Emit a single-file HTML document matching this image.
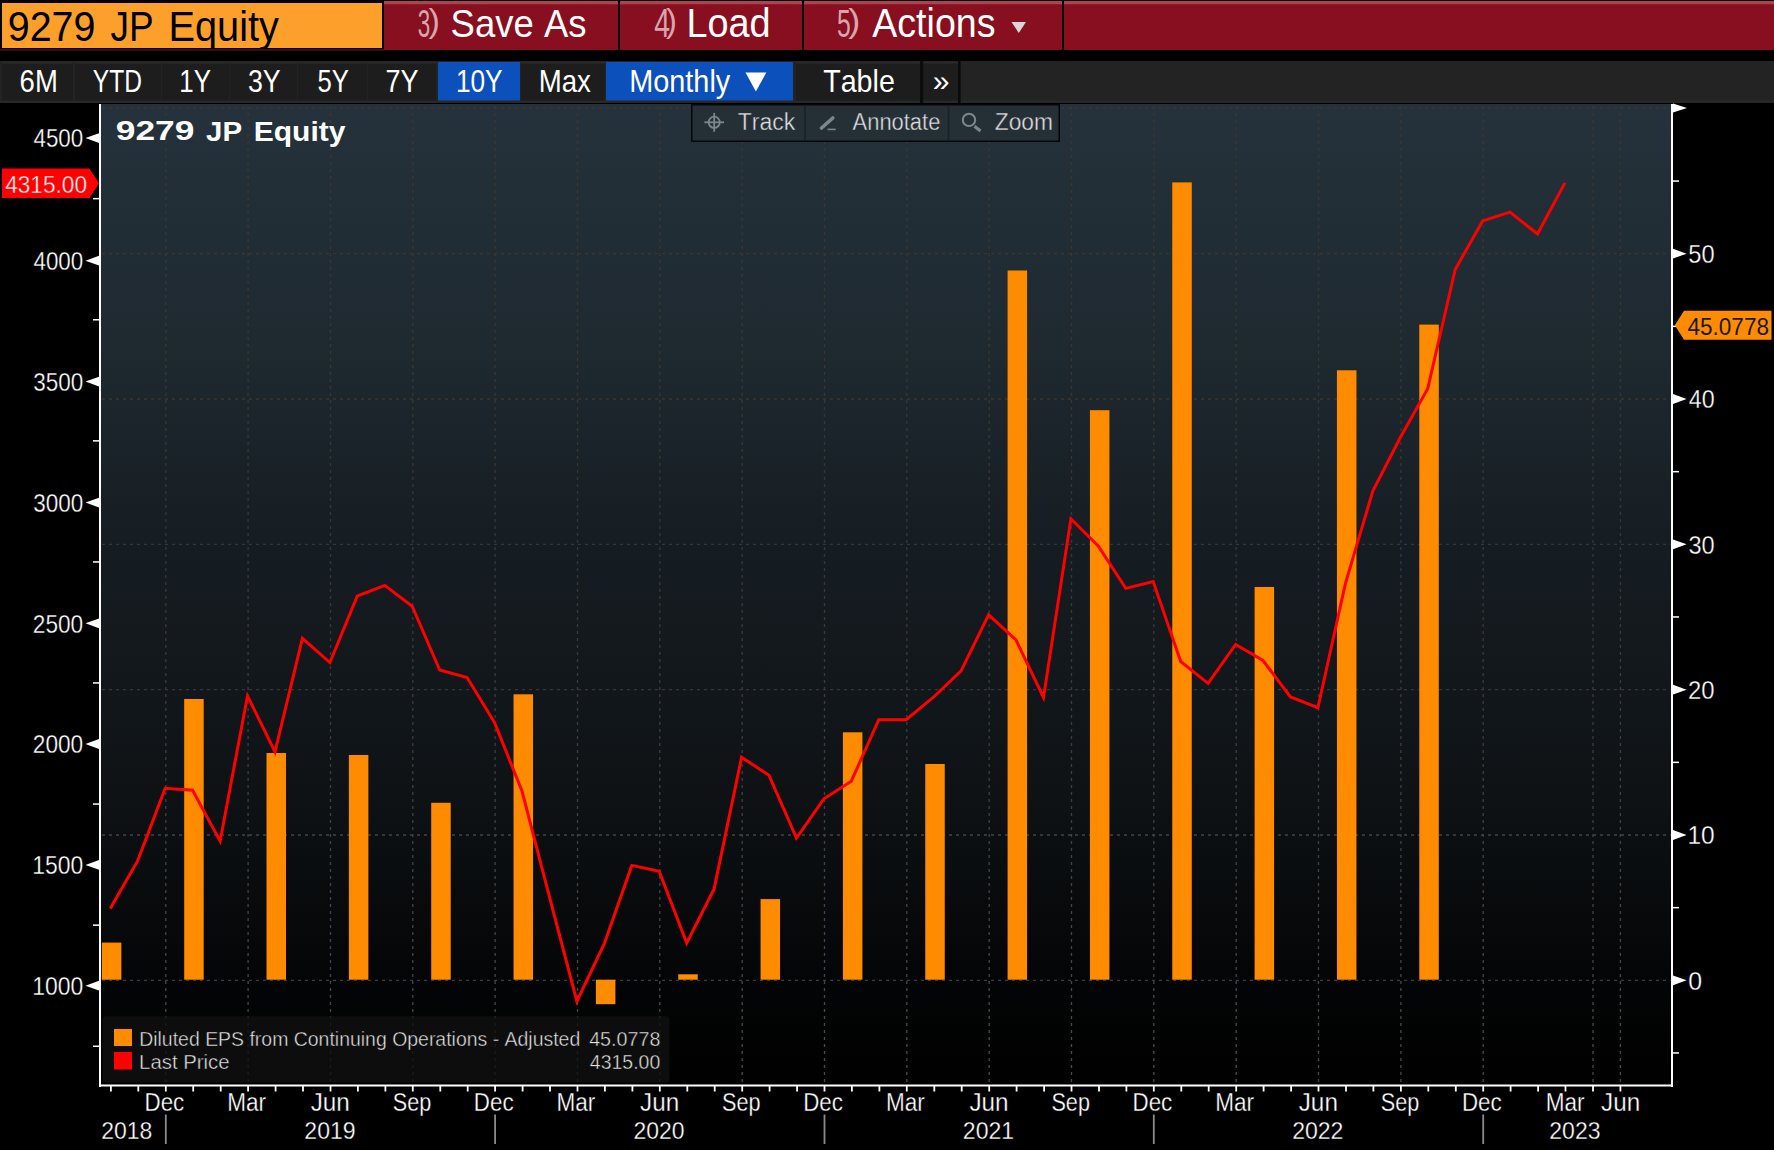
<!DOCTYPE html><html><head><meta charset="utf-8"><style>
html,body{margin:0;padding:0;background:#000;width:1774px;height:1150px;overflow:hidden}
svg{display:block}
text{font-family:"Liberation Sans", sans-serif;font-kerning:none}
</style></head><body>
<svg width="1774" height="1150" viewBox="0 0 1774 1150">
<defs>
<linearGradient id="bg" x1="0" y1="0" x2="0" y2="1">
<stop offset="0" stop-color="#25323b"/>
<stop offset="0.25" stop-color="#1e2930"/>
<stop offset="0.45" stop-color="#161d22"/>
<stop offset="0.71" stop-color="#0e1215"/>
<stop offset="0.89" stop-color="#040506"/>
<stop offset="1" stop-color="#000000"/>
</linearGradient>
<linearGradient id="gv" gradientUnits="userSpaceOnUse" x1="0" y1="104" x2="0" y2="1085">
<stop offset="0" stop-color="#3e352d"/>
<stop offset="0.45" stop-color="#3a3633"/>
<stop offset="1" stop-color="#4a4a4a"/>
</linearGradient>
<clipPath id="oclip"><rect x="2" y="3" width="380" height="45"/></clipPath>
</defs>
<rect x="0" y="0" width="1774" height="1150" fill="#000"/>

<rect x="0" y="49" width="384" height="2" fill="#3a0c0c"/>
<rect x="2" y="3" width="380" height="45" fill="#fda02b"/>
<rect x="384" y="1" width="1390" height="49" fill="#880f1f"/>
<rect x="384" y="1" width="1390" height="3" fill="#a84555"/>
<rect x="384" y="4" width="1390" height="1" fill="#931a2b"/>
<rect x="618" y="0" width="2" height="51" fill="#000"/>
<rect x="802" y="0" width="2" height="51" fill="#000"/>
<rect x="1062" y="0" width="2" height="51" fill="#000"/>
<g clip-path="url(#oclip)">
<text x="7.75" y="40.79" font-size="42.09" fill="#000" font-weight="normal" textLength="87.72" lengthAdjust="spacingAndGlyphs">9279</text>
<text x="110.42" y="40.79" font-size="42.09" fill="#000" font-weight="normal" textLength="43.13" lengthAdjust="spacingAndGlyphs">JP</text>
<text x="168.54" y="41.20" font-size="43.31" fill="#000" font-weight="normal" textLength="110.33" lengthAdjust="spacingAndGlyphs">Equity</text>
</g>
<text x="417.65" y="37.01" font-size="39.55" fill="#d9a5ad" font-weight="normal" textLength="12.43" lengthAdjust="spacingAndGlyphs">3</text>
<text x="428.50" y="32.30" font-size="33.81" fill="#d9a5ad" font-weight="normal" textLength="11.43" lengthAdjust="spacingAndGlyphs">)</text>
<text x="450.54" y="37.02" font-size="38.98" fill="#ffffff" font-weight="normal" textLength="135.98" lengthAdjust="spacingAndGlyphs">Save As</text>
<text x="654.35" y="37.40" font-size="40.70" fill="#d9a5ad" font-weight="normal" textLength="15.78" lengthAdjust="spacingAndGlyphs">4</text>
<text x="666.11" y="32.30" font-size="33.81" fill="#d9a5ad" font-weight="normal" textLength="10.93" lengthAdjust="spacingAndGlyphs">)</text>
<text x="686.39" y="37.40" font-size="40.12" fill="#ffffff" font-weight="normal" textLength="84.25" lengthAdjust="spacingAndGlyphs">Load</text>
<text x="837.01" y="37.01" font-size="39.55" fill="#d9a5ad" font-weight="normal" textLength="13.72" lengthAdjust="spacingAndGlyphs">5</text>
<text x="848.19" y="32.30" font-size="33.81" fill="#d9a5ad" font-weight="normal" textLength="12.06" lengthAdjust="spacingAndGlyphs">)</text>
<text x="872.23" y="37.40" font-size="40.12" fill="#ffffff" font-weight="normal" textLength="123.33" lengthAdjust="spacingAndGlyphs">Actions</text>
<path d="M1011.5 22 L1026 22 L1018.75 33 Z" fill="#d8d8d8"/>
<rect x="0" y="61" width="1774" height="42" fill="#232323"/>
<rect x="2" y="62" width="71" height="39" fill="#1d1d1d"/>
<rect x="2" y="62" width="71" height="1.5" fill="#2b2b2b"/>
<rect x="75" y="62" width="86" height="39" fill="#1d1d1d"/>
<rect x="75" y="62" width="86" height="1.5" fill="#2b2b2b"/>
<rect x="162" y="62" width="67" height="39" fill="#1d1d1d"/>
<rect x="162" y="62" width="67" height="1.5" fill="#2b2b2b"/>
<rect x="230" y="62" width="67" height="39" fill="#1d1d1d"/>
<rect x="230" y="62" width="67" height="1.5" fill="#2b2b2b"/>
<rect x="298" y="62" width="69" height="39" fill="#1d1d1d"/>
<rect x="298" y="62" width="69" height="1.5" fill="#2b2b2b"/>
<rect x="368" y="62" width="68" height="39" fill="#1d1d1d"/>
<rect x="368" y="62" width="68" height="1.5" fill="#2b2b2b"/>
<rect x="438" y="62" width="82" height="39" fill="#0c50bc"/>
<rect x="521" y="62" width="84" height="39" fill="#1d1d1d"/>
<rect x="521" y="62" width="84" height="1.5" fill="#2b2b2b"/>
<rect x="606" y="62" width="187" height="39" fill="#0c50bc"/>
<rect x="796" y="62" width="125" height="39" fill="#1d1d1d"/>
<rect x="796" y="62" width="125" height="1.5" fill="#2b2b2b"/>
<rect x="923" y="62" width="35" height="39" fill="#1d1d1d"/>
<rect x="923" y="62" width="35" height="1.5" fill="#2b2b2b"/>
<rect x="0" y="100.5" width="1774" height="2.5" fill="#282828"/>
<rect x="920" y="61" width="3.2" height="42" fill="#0c0c0c"/>
<rect x="958" y="61" width="2.6" height="42" fill="#0a0a0a"/>
<text x="19.61" y="91.80" font-size="31.54" fill="#ffffff" font-weight="normal" textLength="38.15" lengthAdjust="spacingAndGlyphs">6M</text>
<text x="92.76" y="91.80" font-size="31.54" fill="#ffffff" font-weight="normal" textLength="49.11" lengthAdjust="spacingAndGlyphs">YTD</text>
<text x="179.33" y="91.80" font-size="31.54" fill="#ffffff" font-weight="normal" textLength="31.64" lengthAdjust="spacingAndGlyphs">1Y</text>
<text x="247.88" y="91.80" font-size="31.54" fill="#ffffff" font-weight="normal" textLength="32.71" lengthAdjust="spacingAndGlyphs">3Y</text>
<text x="317.57" y="91.80" font-size="31.54" fill="#ffffff" font-weight="normal" textLength="31.39" lengthAdjust="spacingAndGlyphs">5Y</text>
<text x="385.51" y="91.80" font-size="31.54" fill="#ffffff" font-weight="normal" textLength="33.08" lengthAdjust="spacingAndGlyphs">7Y</text>
<text x="455.90" y="91.80" font-size="31.54" fill="#ffffff" font-weight="normal" textLength="46.67" lengthAdjust="spacingAndGlyphs">10Y</text>
<text x="538.74" y="91.80" font-size="31.54" fill="#ffffff" font-weight="normal" textLength="52.16" lengthAdjust="spacingAndGlyphs">Max</text>
<text x="629.13" y="91.80" font-size="31.54" fill="#ffffff" font-weight="normal" textLength="101.13" lengthAdjust="spacingAndGlyphs">Monthly</text>
<text x="823.16" y="91.80" font-size="31.54" fill="#ffffff" font-weight="normal" textLength="71.72" lengthAdjust="spacingAndGlyphs">Table</text>
<path d="M745.5 72.5 L766.3 72.5 L755.9 91.6 Z" fill="#fff"/>
<text x="941" y="91" font-size="30" fill="#fff" text-anchor="middle">»</text>
<rect x="101" y="104" width="1572" height="981" fill="url(#bg)"/>
<line x1="102" y1="253.7" x2="1671" y2="253.7" stroke="#3e362e" stroke-width="1.3" stroke-dasharray="3 4"/>
<line x1="102" y1="399.0" x2="1671" y2="399.0" stroke="#3e362e" stroke-width="1.3" stroke-dasharray="3 4"/>
<line x1="102" y1="544.3" x2="1671" y2="544.3" stroke="#3a3633" stroke-width="1.3" stroke-dasharray="3 4"/>
<line x1="102" y1="689.7" x2="1671" y2="689.7" stroke="#3a3633" stroke-width="1.3" stroke-dasharray="3 4"/>
<line x1="102" y1="835.0" x2="1671" y2="835.0" stroke="#444444" stroke-width="1.3" stroke-dasharray="3 4"/>
<line x1="102" y1="980.3" x2="1671" y2="980.3" stroke="#3c3c3c" stroke-width="1.3" stroke-dasharray="3 4"/>
<line x1="102" y1="108" x2="1671" y2="108" stroke="#3a3630" stroke-width="1.3" stroke-dasharray="3 4"/>
<line x1="165.8" y1="106" x2="165.8" y2="1084" stroke="url(#gv)" stroke-width="1.3" stroke-dasharray="3 4"/>
<line x1="248.1" y1="106" x2="248.1" y2="1084" stroke="url(#gv)" stroke-width="1.3" stroke-dasharray="3 4"/>
<line x1="330.5" y1="106" x2="330.5" y2="1084" stroke="url(#gv)" stroke-width="1.3" stroke-dasharray="3 4"/>
<line x1="412.8" y1="106" x2="412.8" y2="1084" stroke="url(#gv)" stroke-width="1.3" stroke-dasharray="3 4"/>
<line x1="495.1" y1="106" x2="495.1" y2="1084" stroke="url(#gv)" stroke-width="1.3" stroke-dasharray="3 4"/>
<line x1="577.5" y1="106" x2="577.5" y2="1084" stroke="url(#gv)" stroke-width="1.3" stroke-dasharray="3 4"/>
<line x1="659.8" y1="106" x2="659.8" y2="1084" stroke="url(#gv)" stroke-width="1.3" stroke-dasharray="3 4"/>
<line x1="742.2" y1="106" x2="742.2" y2="1084" stroke="url(#gv)" stroke-width="1.3" stroke-dasharray="3 4"/>
<line x1="824.5" y1="106" x2="824.5" y2="1084" stroke="url(#gv)" stroke-width="1.3" stroke-dasharray="3 4"/>
<line x1="906.8" y1="106" x2="906.8" y2="1084" stroke="url(#gv)" stroke-width="1.3" stroke-dasharray="3 4"/>
<line x1="989.2" y1="106" x2="989.2" y2="1084" stroke="url(#gv)" stroke-width="1.3" stroke-dasharray="3 4"/>
<line x1="1071.5" y1="106" x2="1071.5" y2="1084" stroke="url(#gv)" stroke-width="1.3" stroke-dasharray="3 4"/>
<line x1="1153.8" y1="106" x2="1153.8" y2="1084" stroke="url(#gv)" stroke-width="1.3" stroke-dasharray="3 4"/>
<line x1="1236.2" y1="106" x2="1236.2" y2="1084" stroke="url(#gv)" stroke-width="1.3" stroke-dasharray="3 4"/>
<line x1="1318.5" y1="106" x2="1318.5" y2="1084" stroke="url(#gv)" stroke-width="1.3" stroke-dasharray="3 4"/>
<line x1="1400.9" y1="106" x2="1400.9" y2="1084" stroke="url(#gv)" stroke-width="1.3" stroke-dasharray="3 4"/>
<line x1="1483.2" y1="106" x2="1483.2" y2="1084" stroke="url(#gv)" stroke-width="1.3" stroke-dasharray="3 4"/>
<line x1="1593.0" y1="106" x2="1593.0" y2="1084" stroke="url(#gv)" stroke-width="1.3" stroke-dasharray="3 4"/>
<line x1="1620.4" y1="106" x2="1620.4" y2="1084" stroke="url(#gv)" stroke-width="1.3" stroke-dasharray="3 4"/>
<rect x="101.85" y="942.6" width="19.5" height="37.1" fill="#ff8c00"/>
<rect x="184.19" y="699.0" width="19.5" height="280.7" fill="#ff8c00"/>
<rect x="266.53" y="753.0" width="19.5" height="226.7" fill="#ff8c00"/>
<rect x="348.87" y="755.0" width="19.5" height="224.7" fill="#ff8c00"/>
<rect x="431.21" y="802.8" width="19.5" height="176.9" fill="#ff8c00"/>
<rect x="513.55" y="694.3" width="19.5" height="285.4" fill="#ff8c00"/>
<rect x="595.89" y="979.7" width="19.5" height="24.5" fill="#ff8c00"/>
<rect x="678.23" y="974.3" width="19.5" height="5.4" fill="#ff8c00"/>
<rect x="760.57" y="899.1" width="19.5" height="80.6" fill="#ff8c00"/>
<rect x="842.91" y="732.3" width="19.5" height="247.4" fill="#ff8c00"/>
<rect x="925.25" y="764.0" width="19.5" height="215.7" fill="#ff8c00"/>
<rect x="1007.59" y="270.5" width="19.5" height="709.2" fill="#ff8c00"/>
<rect x="1089.93" y="410.2" width="19.5" height="569.5" fill="#ff8c00"/>
<rect x="1172.27" y="182.4" width="19.5" height="797.3" fill="#ff8c00"/>
<rect x="1254.61" y="587.0" width="19.5" height="392.7" fill="#ff8c00"/>
<rect x="1336.95" y="370.3" width="19.5" height="609.4" fill="#ff8c00"/>
<rect x="1419.29" y="324.6" width="19.5" height="655.1" fill="#ff8c00"/>
<polyline points="110.3,908.6 137.7,860.7 165.2,788.3 192.6,790.2 220.1,841.1 247.5,695.9 275.0,751.9 302.4,638.3 329.9,662.6 357.3,596.0 384.8,585.4 412.2,606.2 439.7,670.0 467.1,677.5 494.5,722.5 522.0,791.0 549.4,896.7 576.9,1001.5 604.3,943.7 631.8,865.4 659.2,871.3 686.7,943.0 714.1,888.9 741.6,757.3 769.0,775.3 796.5,838.0 823.9,798.8 851.3,781.2 878.8,719.7 906.2,719.7 933.7,697.0 961.1,670.8 988.6,614.8 1016.0,640.0 1043.5,697.5 1070.9,518.8 1098.4,546.1 1125.8,588.4 1153.2,581.6 1180.7,661.5 1208.1,683.4 1235.6,644.4 1263.0,660.5 1290.5,697.0 1317.9,707.7 1345.4,583.6 1372.8,491.0 1400.3,437.5 1427.7,388.8 1455.2,269.5 1482.6,220.9 1510.0,212.1 1537.5,234.0 1564.9,182.9" fill="none" stroke="#ff0000" stroke-width="3" stroke-linejoin="miter"/>
<text x="115.78" y="140.43" font-size="27.40" fill="#ffffff" font-weight="bold" textLength="78.53" lengthAdjust="spacingAndGlyphs">9279</text>
<text x="206.06" y="140.70" font-size="28.20" fill="#ffffff" font-weight="bold" textLength="35.95" lengthAdjust="spacingAndGlyphs">JP</text>
<text x="253.79" y="140.70" font-size="28.20" fill="#ffffff" font-weight="bold" textLength="91.67" lengthAdjust="spacingAndGlyphs">Equity</text>
<rect x="692.5" y="105.5" width="366" height="35" fill="#262f36" fill-opacity="0.88"/>
<rect x="691.75" y="104.75" width="367.5" height="36.5" fill="none" stroke="#050607" stroke-width="1.5"/>
<rect x="804" y="106" width="2" height="34" fill="#1b2328"/>
<rect x="947.5" y="106" width="2" height="34" fill="#1b2328"/>
<g stroke="#7d868d" stroke-width="1.8" fill="none"><circle cx="714.2" cy="122.3" r="5.6"/><line x1="704.4" y1="122.3" x2="724" y2="122.3"/><line x1="714.2" y1="112.9" x2="714.2" y2="131.8"/></g>
<g stroke="#7d868d" fill="none"><line x1="821.5" y1="128" x2="832.8" y2="118" stroke-width="3.6" stroke-linecap="round"/><line x1="827.5" y1="129.4" x2="835.7" y2="129.4" stroke-width="1.6"/></g>
<g stroke="#7d868d" fill="none"><circle cx="969" cy="119.9" r="6.2" stroke-width="2"/><line x1="974.5" y1="126.2" x2="980.5" y2="131" stroke-width="3.2"/></g>
<text x="737.78" y="130.20" font-size="23.98" fill="#e0e0e0" font-weight="normal" textLength="57.58" lengthAdjust="spacingAndGlyphs" stroke="#262f36" stroke-width="0.4">Track</text>
<text x="852.56" y="130.20" font-size="23.98" fill="#e0e0e0" font-weight="normal" textLength="87.82" lengthAdjust="spacingAndGlyphs" stroke="#262f36" stroke-width="0.4">Annotate</text>
<text x="994.78" y="130.20" font-size="23.98" fill="#e0e0e0" font-weight="normal" textLength="58.22" lengthAdjust="spacingAndGlyphs" stroke="#262f36" stroke-width="0.4">Zoom</text>
<rect x="102.5" y="1016.2" width="567" height="66.3" rx="4" fill="#101010" fill-opacity="0.8"/>
<rect x="114" y="1029" width="18" height="17" fill="#ff8c00"/>
<rect x="114" y="1052" width="18" height="17.5" fill="#ff0000"/>
<text x="139.20" y="1046.00" font-size="20.06" fill="#e6e6e6" font-weight="normal" textLength="441.05" lengthAdjust="spacingAndGlyphs" stroke="#0e0e0e" stroke-width="0.45">Diluted EPS from Continuing Operations - Adjusted</text>
<text x="589.15" y="1046.10" font-size="20.20" fill="#e6e6e6" font-weight="normal" textLength="71.21" lengthAdjust="spacingAndGlyphs" stroke="#0e0e0e" stroke-width="0.45">45.0778</text>
<text x="139.13" y="1068.90" font-size="20.20" fill="#e6e6e6" font-weight="normal" textLength="90.37" lengthAdjust="spacingAndGlyphs" stroke="#0e0e0e" stroke-width="0.45">Last Price</text>
<text x="589.85" y="1069.00" font-size="20.06" fill="#e6e6e6" font-weight="normal" textLength="70.41" lengthAdjust="spacingAndGlyphs" stroke="#0e0e0e" stroke-width="0.45">4315.00</text>
<rect x="99" y="104" width="2" height="983" fill="#fff"/>
<rect x="1671" y="104" width="2" height="983" fill="#fff"/>
<rect x="99" y="1084.5" width="1574" height="2" fill="#fff"/>
<path d="M99 133.2 L85.5 138.1 L99 143.0 Z" fill="#fff"/>
<text x="33.49" y="147.46" font-size="24.86" fill="#ffffff" font-weight="normal" textLength="49.68" lengthAdjust="spacingAndGlyphs" stroke="#000" stroke-width="0.3">4500</text>
<path d="M99 255.8 L85.5 260.7 L99 265.6 Z" fill="#fff"/>
<text x="33.49" y="270.06" font-size="24.86" fill="#ffffff" font-weight="normal" textLength="49.68" lengthAdjust="spacingAndGlyphs" stroke="#000" stroke-width="0.3">4000</text>
<path d="M99 376.7 L85.5 381.6 L99 386.5 Z" fill="#fff"/>
<text x="33.14" y="390.96" font-size="24.86" fill="#ffffff" font-weight="normal" textLength="50.04" lengthAdjust="spacingAndGlyphs" stroke="#000" stroke-width="0.3">3500</text>
<path d="M99 497.7 L85.5 502.6 L99 507.5 Z" fill="#fff"/>
<text x="33.14" y="511.96" font-size="24.86" fill="#ffffff" font-weight="normal" textLength="50.04" lengthAdjust="spacingAndGlyphs" stroke="#000" stroke-width="0.3">3000</text>
<path d="M99 618.4 L85.5 623.3 L99 628.2 Z" fill="#fff"/>
<text x="32.86" y="632.66" font-size="24.86" fill="#ffffff" font-weight="normal" textLength="50.32" lengthAdjust="spacingAndGlyphs" stroke="#000" stroke-width="0.3">2500</text>
<path d="M99 739.1 L85.5 744.0 L99 748.9 Z" fill="#fff"/>
<text x="32.86" y="753.36" font-size="24.86" fill="#ffffff" font-weight="normal" textLength="50.32" lengthAdjust="spacingAndGlyphs" stroke="#000" stroke-width="0.3">2000</text>
<path d="M99 860.0 L85.5 864.9 L99 869.8 Z" fill="#fff"/>
<text x="32.26" y="874.26" font-size="24.86" fill="#ffffff" font-weight="normal" textLength="50.94" lengthAdjust="spacingAndGlyphs" stroke="#000" stroke-width="0.3">1500</text>
<path d="M99 980.8 L85.5 985.7 L99 990.6 Z" fill="#fff"/>
<text x="32.26" y="995.06" font-size="24.86" fill="#ffffff" font-weight="normal" textLength="50.94" lengthAdjust="spacingAndGlyphs" stroke="#000" stroke-width="0.3">1000</text>
<rect x="93" y="197.9" width="6" height="1.5" fill="#fff"/>
<rect x="93" y="319.0" width="6" height="1.5" fill="#fff"/>
<rect x="93" y="440.1" width="6" height="1.5" fill="#fff"/>
<rect x="93" y="561.2" width="6" height="1.5" fill="#fff"/>
<rect x="93" y="682.2" width="6" height="1.5" fill="#fff"/>
<rect x="93" y="803.3" width="6" height="1.5" fill="#fff"/>
<rect x="93" y="924.4" width="6" height="1.5" fill="#fff"/>
<rect x="93" y="1045.5" width="6" height="1.5" fill="#fff"/>
<path d="M2 168.5 L89.4 168.5 L99 183.3 L89.4 198.1 L2 198.1 Z" fill="#ff0000"/>
<text x="5.18" y="193.06" font-size="24.58" fill="#ffffff" font-weight="normal" textLength="81.80" lengthAdjust="spacingAndGlyphs" stroke="#ff0000" stroke-width="0.4">4315.00</text>
<path d="M1673 248.8 L1686.6 253.7 L1673 258.6 Z" fill="#fff"/>
<text x="1688.35" y="263.06" font-size="24.86" fill="#ffffff" font-weight="normal" textLength="26.27" lengthAdjust="spacingAndGlyphs" stroke="#000" stroke-width="0.3">50</text>
<path d="M1673 394.1 L1686.6 399.0 L1673 403.9 Z" fill="#fff"/>
<text x="1688.77" y="408.38" font-size="24.86" fill="#ffffff" font-weight="normal" textLength="25.84" lengthAdjust="spacingAndGlyphs" stroke="#000" stroke-width="0.3">40</text>
<path d="M1673 539.4 L1686.6 544.3 L1673 549.2 Z" fill="#fff"/>
<text x="1688.40" y="553.70" font-size="24.86" fill="#ffffff" font-weight="normal" textLength="26.22" lengthAdjust="spacingAndGlyphs" stroke="#000" stroke-width="0.3">30</text>
<path d="M1673 684.8 L1686.6 689.7 L1673 694.6 Z" fill="#fff"/>
<text x="1688.10" y="699.02" font-size="24.86" fill="#ffffff" font-weight="normal" textLength="26.53" lengthAdjust="spacingAndGlyphs" stroke="#000" stroke-width="0.3">20</text>
<path d="M1673 830.1 L1686.6 835.0 L1673 839.9 Z" fill="#fff"/>
<text x="1687.44" y="844.34" font-size="24.86" fill="#ffffff" font-weight="normal" textLength="27.22" lengthAdjust="spacingAndGlyphs" stroke="#000" stroke-width="0.3">10</text>
<path d="M1673 975.4 L1686.6 980.3 L1673 985.2 Z" fill="#fff"/>
<text x="1688.33" y="989.66" font-size="24.86" fill="#ffffff" font-weight="normal" textLength="13.84" lengthAdjust="spacingAndGlyphs" stroke="#000" stroke-width="0.3">0</text>
<rect x="1673" y="180.3" width="6" height="1.5" fill="#fff"/>
<rect x="1673" y="325.6" width="6" height="1.5" fill="#fff"/>
<rect x="1673" y="470.9" width="6" height="1.5" fill="#fff"/>
<rect x="1673" y="616.2" width="6" height="1.5" fill="#fff"/>
<rect x="1673" y="761.6" width="6" height="1.5" fill="#fff"/>
<rect x="1673" y="906.9" width="6" height="1.5" fill="#fff"/>
<rect x="1673" y="1052.2" width="6" height="1.5" fill="#fff"/>
<path d="M1673 103.5 L1687 108 L1673 112.5 Z" fill="#fff"/>
<path d="M1674.8 325.2 L1684 310.7 L1771.5 310.7 L1771.5 339.7 L1684 339.7 Z" fill="#ff8c00"/>
<text x="1687.48" y="334.60" font-size="23.73" fill="#1a1a1a" font-weight="normal" textLength="81.50" lengthAdjust="spacingAndGlyphs">45.0778</text>
<rect x="110.0" y="1085" width="1.8" height="6.5" fill="#fff"/>
<rect x="137.4" y="1085" width="1.8" height="6.5" fill="#fff"/>
<rect x="164.9" y="1085" width="1.8" height="6.5" fill="#fff"/>
<rect x="192.3" y="1085" width="1.8" height="6.5" fill="#fff"/>
<rect x="219.8" y="1085" width="1.8" height="6.5" fill="#fff"/>
<rect x="247.2" y="1085" width="1.8" height="6.5" fill="#fff"/>
<rect x="274.7" y="1085" width="1.8" height="6.5" fill="#fff"/>
<rect x="302.1" y="1085" width="1.8" height="6.5" fill="#fff"/>
<rect x="329.6" y="1085" width="1.8" height="6.5" fill="#fff"/>
<rect x="357.0" y="1085" width="1.8" height="6.5" fill="#fff"/>
<rect x="384.5" y="1085" width="1.8" height="6.5" fill="#fff"/>
<rect x="411.9" y="1085" width="1.8" height="6.5" fill="#fff"/>
<rect x="439.4" y="1085" width="1.8" height="6.5" fill="#fff"/>
<rect x="466.8" y="1085" width="1.8" height="6.5" fill="#fff"/>
<rect x="494.2" y="1085" width="1.8" height="6.5" fill="#fff"/>
<rect x="521.7" y="1085" width="1.8" height="6.5" fill="#fff"/>
<rect x="549.1" y="1085" width="1.8" height="6.5" fill="#fff"/>
<rect x="576.6" y="1085" width="1.8" height="6.5" fill="#fff"/>
<rect x="604.0" y="1085" width="1.8" height="6.5" fill="#fff"/>
<rect x="631.5" y="1085" width="1.8" height="6.5" fill="#fff"/>
<rect x="658.9" y="1085" width="1.8" height="6.5" fill="#fff"/>
<rect x="686.4" y="1085" width="1.8" height="6.5" fill="#fff"/>
<rect x="713.8" y="1085" width="1.8" height="6.5" fill="#fff"/>
<rect x="741.3" y="1085" width="1.8" height="6.5" fill="#fff"/>
<rect x="768.7" y="1085" width="1.8" height="6.5" fill="#fff"/>
<rect x="796.2" y="1085" width="1.8" height="6.5" fill="#fff"/>
<rect x="823.6" y="1085" width="1.8" height="6.5" fill="#fff"/>
<rect x="851.0" y="1085" width="1.8" height="6.5" fill="#fff"/>
<rect x="878.5" y="1085" width="1.8" height="6.5" fill="#fff"/>
<rect x="905.9" y="1085" width="1.8" height="6.5" fill="#fff"/>
<rect x="933.4" y="1085" width="1.8" height="6.5" fill="#fff"/>
<rect x="960.8" y="1085" width="1.8" height="6.5" fill="#fff"/>
<rect x="988.3" y="1085" width="1.8" height="6.5" fill="#fff"/>
<rect x="1015.7" y="1085" width="1.8" height="6.5" fill="#fff"/>
<rect x="1043.2" y="1085" width="1.8" height="6.5" fill="#fff"/>
<rect x="1070.6" y="1085" width="1.8" height="6.5" fill="#fff"/>
<rect x="1098.1" y="1085" width="1.8" height="6.5" fill="#fff"/>
<rect x="1125.5" y="1085" width="1.8" height="6.5" fill="#fff"/>
<rect x="1152.9" y="1085" width="1.8" height="6.5" fill="#fff"/>
<rect x="1180.4" y="1085" width="1.8" height="6.5" fill="#fff"/>
<rect x="1207.8" y="1085" width="1.8" height="6.5" fill="#fff"/>
<rect x="1235.3" y="1085" width="1.8" height="6.5" fill="#fff"/>
<rect x="1262.7" y="1085" width="1.8" height="6.5" fill="#fff"/>
<rect x="1290.2" y="1085" width="1.8" height="6.5" fill="#fff"/>
<rect x="1317.6" y="1085" width="1.8" height="6.5" fill="#fff"/>
<rect x="1345.1" y="1085" width="1.8" height="6.5" fill="#fff"/>
<rect x="1372.5" y="1085" width="1.8" height="6.5" fill="#fff"/>
<rect x="1400.0" y="1085" width="1.8" height="6.5" fill="#fff"/>
<rect x="1427.4" y="1085" width="1.8" height="6.5" fill="#fff"/>
<rect x="1454.9" y="1085" width="1.8" height="6.5" fill="#fff"/>
<rect x="1482.3" y="1085" width="1.8" height="6.5" fill="#fff"/>
<rect x="1509.7" y="1085" width="1.8" height="6.5" fill="#fff"/>
<rect x="1537.2" y="1085" width="1.8" height="6.5" fill="#fff"/>
<rect x="1564.6" y="1085" width="1.8" height="6.5" fill="#fff"/>
<rect x="1592.1" y="1085" width="1.8" height="6.5" fill="#fff"/>
<rect x="1619.5" y="1085" width="1.8" height="6.5" fill="#fff"/>
<text x="144.51" y="1110.90" font-size="25.15" fill="#ffffff" font-weight="normal" textLength="39.72" lengthAdjust="spacingAndGlyphs" stroke="#000" stroke-width="0.3">Dec</text>
<text x="227.18" y="1110.90" font-size="25.15" fill="#ffffff" font-weight="normal" textLength="38.82" lengthAdjust="spacingAndGlyphs" stroke="#000" stroke-width="0.3">Mar</text>
<text x="310.69" y="1110.90" font-size="25.15" fill="#ffffff" font-weight="normal" textLength="39.16" lengthAdjust="spacingAndGlyphs" stroke="#000" stroke-width="0.3">Jun</text>
<text x="392.72" y="1110.90" font-size="25.15" fill="#ffffff" font-weight="normal" textLength="38.49" lengthAdjust="spacingAndGlyphs" stroke="#000" stroke-width="0.3">Sep</text>
<text x="473.86" y="1110.90" font-size="25.15" fill="#ffffff" font-weight="normal" textLength="39.72" lengthAdjust="spacingAndGlyphs" stroke="#000" stroke-width="0.3">Dec</text>
<text x="556.53" y="1110.90" font-size="25.15" fill="#ffffff" font-weight="normal" textLength="38.82" lengthAdjust="spacingAndGlyphs" stroke="#000" stroke-width="0.3">Mar</text>
<text x="640.04" y="1110.90" font-size="25.15" fill="#ffffff" font-weight="normal" textLength="39.16" lengthAdjust="spacingAndGlyphs" stroke="#000" stroke-width="0.3">Jun</text>
<text x="722.08" y="1110.90" font-size="25.15" fill="#ffffff" font-weight="normal" textLength="38.49" lengthAdjust="spacingAndGlyphs" stroke="#000" stroke-width="0.3">Sep</text>
<text x="803.21" y="1110.90" font-size="25.15" fill="#ffffff" font-weight="normal" textLength="39.72" lengthAdjust="spacingAndGlyphs" stroke="#000" stroke-width="0.3">Dec</text>
<text x="885.88" y="1110.90" font-size="25.15" fill="#ffffff" font-weight="normal" textLength="38.82" lengthAdjust="spacingAndGlyphs" stroke="#000" stroke-width="0.3">Mar</text>
<text x="969.39" y="1110.90" font-size="25.15" fill="#ffffff" font-weight="normal" textLength="39.16" lengthAdjust="spacingAndGlyphs" stroke="#000" stroke-width="0.3">Jun</text>
<text x="1051.43" y="1110.90" font-size="25.15" fill="#ffffff" font-weight="normal" textLength="38.49" lengthAdjust="spacingAndGlyphs" stroke="#000" stroke-width="0.3">Sep</text>
<text x="1132.57" y="1110.90" font-size="25.15" fill="#ffffff" font-weight="normal" textLength="39.72" lengthAdjust="spacingAndGlyphs" stroke="#000" stroke-width="0.3">Dec</text>
<text x="1215.24" y="1110.90" font-size="25.15" fill="#ffffff" font-weight="normal" textLength="38.82" lengthAdjust="spacingAndGlyphs" stroke="#000" stroke-width="0.3">Mar</text>
<text x="1298.74" y="1110.90" font-size="25.15" fill="#ffffff" font-weight="normal" textLength="39.16" lengthAdjust="spacingAndGlyphs" stroke="#000" stroke-width="0.3">Jun</text>
<text x="1380.78" y="1110.90" font-size="25.15" fill="#ffffff" font-weight="normal" textLength="38.49" lengthAdjust="spacingAndGlyphs" stroke="#000" stroke-width="0.3">Sep</text>
<text x="1461.92" y="1110.90" font-size="25.15" fill="#ffffff" font-weight="normal" textLength="39.72" lengthAdjust="spacingAndGlyphs" stroke="#000" stroke-width="0.3">Dec</text>
<text x="1545.65" y="1110.90" font-size="25.15" fill="#ffffff" font-weight="normal" textLength="38.82" lengthAdjust="spacingAndGlyphs" stroke="#000" stroke-width="0.3">Mar</text>
<text x="1601.02" y="1110.90" font-size="25.15" fill="#ffffff" font-weight="normal" textLength="39.16" lengthAdjust="spacingAndGlyphs" stroke="#000" stroke-width="0.3">Jun</text>
<text x="101.24" y="1138.56" font-size="24.58" fill="#ffffff" font-weight="normal" textLength="51.16" lengthAdjust="spacingAndGlyphs" stroke="#000" stroke-width="0.3">2018</text>
<text x="304.34" y="1138.56" font-size="24.58" fill="#ffffff" font-weight="normal" textLength="51.25" lengthAdjust="spacingAndGlyphs" stroke="#000" stroke-width="0.3">2019</text>
<text x="633.55" y="1138.56" font-size="24.58" fill="#ffffff" font-weight="normal" textLength="51.05" lengthAdjust="spacingAndGlyphs" stroke="#000" stroke-width="0.3">2020</text>
<text x="962.84" y="1138.56" font-size="24.58" fill="#ffffff" font-weight="normal" textLength="51.29" lengthAdjust="spacingAndGlyphs" stroke="#000" stroke-width="0.3">2021</text>
<text x="1292.14" y="1138.56" font-size="24.58" fill="#ffffff" font-weight="normal" textLength="51.32" lengthAdjust="spacingAndGlyphs" stroke="#000" stroke-width="0.3">2022</text>
<text x="1549.34" y="1138.56" font-size="24.58" fill="#ffffff" font-weight="normal" textLength="51.17" lengthAdjust="spacingAndGlyphs" stroke="#000" stroke-width="0.3">2023</text>
<rect x="164.9" y="1114.5" width="1.8" height="29.5" fill="#8a8a8a"/>
<rect x="494.2" y="1114.5" width="1.8" height="29.5" fill="#8a8a8a"/>
<rect x="823.6" y="1114.5" width="1.8" height="29.5" fill="#8a8a8a"/>
<rect x="1152.9" y="1114.5" width="1.8" height="29.5" fill="#8a8a8a"/>
<rect x="1482.3" y="1114.5" width="1.8" height="29.5" fill="#8a8a8a"/>
</svg></body></html>
